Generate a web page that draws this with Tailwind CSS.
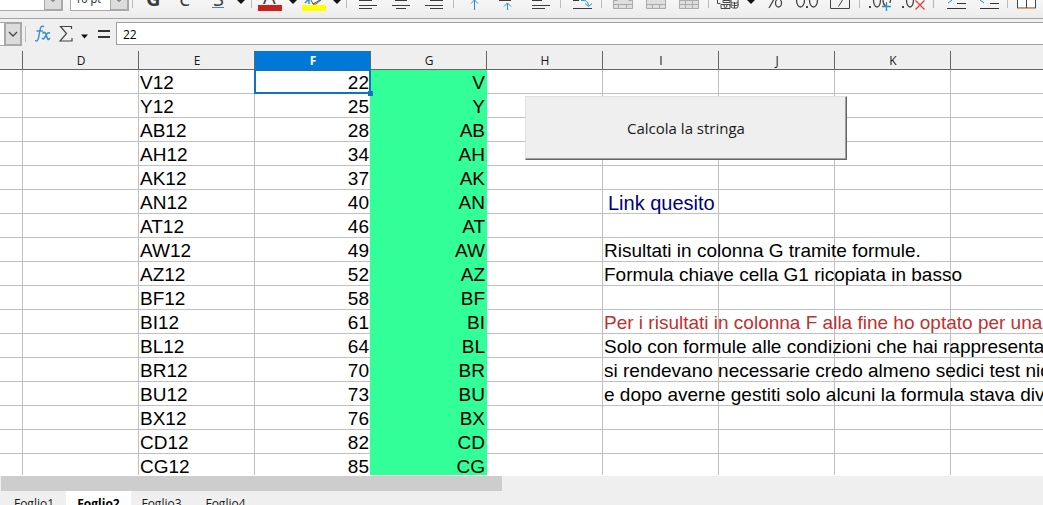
<!DOCTYPE html>
<html lang="it">
<head>
<meta charset="utf-8">
<title>Foglio2</title>
<script src="https://cdn.jsdelivr.net/npm/@tailwindcss/browser@4"></script>
</head>
<body class="flex h-screen flex-col overflow-hidden bg-[#efefef] font-['Open_Sans',sans-serif] text-xs text-[#1a1a1a]">

<!-- Formatting toolbar, scrolled so only its lower edge shows -->
<div role="toolbar" aria-label="Formattazione" class="flex h-[19px] shrink-0 overflow-hidden border-b border-[#a6a6a6] bg-linear-to-b from-[#f6f6f6] to-[#ececec]">
  <div class="flex h-[11px] w-[63px] shrink-0 items-end overflow-hidden border-r-2 border-b border-[#a8a8a8] bg-white">
    <input aria-label="Nome carattere" class="h-6 w-11 min-w-0 bg-white">
    <button aria-label="Elenco caratteri" class="flex h-6 flex-1 items-end justify-center border-b border-l border-[#a8a8a8] bg-[#dcdcdc]"><svg class="h-6 w-4" viewBox="0 0 16 24" fill="none" stroke="#444"><path d="M4 12.500l4 4 4-4"/></svg></button>
  </div>
  <div class="ml-[7px] flex h-[11px] w-[59px] shrink-0 items-end overflow-hidden border-x border-r-2 border-b border-[#a8a8a8] bg-white">
    <input aria-label="Dimensione carattere" value="10 pt" class="h-6 w-10 min-w-0 bg-white pl-1 text-[11px]">
    <button aria-label="Elenco dimensioni" class="flex h-6 flex-1 items-end justify-center border-b border-l border-[#a8a8a8] bg-[#dcdcdc]"><svg class="h-6 w-4" viewBox="0 0 16 24" fill="none" stroke="#444"><path d="M4 12.500l4 4 4-4"/></svg></button>
  </div>
  <svg class="h-[18px] w-[11px] shrink-0" viewBox="129 0 11 18"><path d="M132.500 0v8" stroke="#bbb"/></svg>
  <button aria-label="Grassetto" class="w-[32px] shrink-0"><svg class="h-[18px] w-[32px]" viewBox="140 0 32 18"><text x="146" y="6" font-size="20" font-weight="700" fill="#3b3b3b">G</text></svg></button>
  <button aria-label="Corsivo" class="w-[33px] shrink-0"><svg class="h-[18px] w-[33px]" viewBox="172 0 33 18"><text x="179" y="6" font-size="20" font-style="italic" fill="#3b3b3b">C</text></svg></button>
  <button aria-label="Sottolineato" class="w-[48px] shrink-0"><svg class="h-[18px] w-[48px]" viewBox="205 0 48 18"><text x="213" y="6" font-size="20" fill="#3b3b3b">S</text><path d="M212 7.500h12" stroke="#3a87c8"/><path d="M237 0h8l-4 4z" fill="#111"/><path d="M251.500 0v8" stroke="#bbb"/></svg></button>
  <button aria-label="Colore carattere" class="w-[46px] shrink-0"><svg class="h-[18px] w-[46px]" viewBox="253 0 46 18"><text x="263" y="4" font-size="20" fill="#3b3b3b">A</text><path d="M258 5h24v6h-24z" fill="#c9211e"/><path d="M289 0h8l-4 4z" fill="#111"/></svg></button>
  <button aria-label="Colore evidenziazione" class="w-[52px] shrink-0"><svg class="h-[18px] w-[52px]" viewBox="299 0 52 18" fill="none"><path d="M305 3l3-3M309 0v4" stroke="#3a87c8" stroke-width="1.500"/><path d="M311 0l2 4 7-4M313 4h3l5-4" stroke="#555"/><path d="M302 5h24v6h-24z" fill="#ff0"/><path d="M333 0h8l-4 4z" fill="#111"/><path d="M346.500 0v8" stroke="#bbb"/></svg></button>
  <button aria-label="Allinea a sinistra" class="w-[33px] shrink-0"><svg class="h-[18px] w-[33px]" viewBox="351 0 33 18" stroke="#3b3b3b"><path d="M359 .5h13M359 5.500h18M359 8.500h13"/></svg></button>
  <button aria-label="Centra" class="w-[33px] shrink-0"><svg class="h-[18px] w-[33px]" viewBox="384 0 33 18" stroke="#3b3b3b"><path d="M395 .5h12M392 5.500h18M396 8.500h10"/></svg></button>
  <button aria-label="Allinea a destra" class="w-[40px] shrink-0"><svg class="h-[18px] w-[40px]" viewBox="417 0 40 18" stroke="#3b3b3b"><path d="M430 .5h13M425 5.500h18M430 8.500h13"/><path d="M453.500 0v8" stroke="#bbb"/></svg></button>
  <button aria-label="Allinea in alto" class="w-[34px] shrink-0"><svg class="h-[18px] w-[34px]" viewBox="457 0 34 18" fill="none" stroke="#2b8bd0"><path d="M474.500 10V0M471 3.500l3.500-3.500 3.500 3.500"/></svg></button>
  <button aria-label="Centra verticalmente" class="w-[33px] shrink-0"><svg class="h-[18px] w-[33px]" viewBox="491 0 33 18" fill="none" stroke="#2b8bd0"><path d="M499 .5h12" stroke="#3b3b3b"/><path d="M507.500 10V3M504 6.500l3.500-3.500 3.500 3.500"/></svg></button>
  <button aria-label="Allinea in basso" class="w-[41px] shrink-0"><svg class="h-[18px] w-[41px]" viewBox="524 0 41 18" stroke="#3b3b3b"><path d="M532 .5h10M532 5.500h18M532 8.500h13"/><path d="M560.500 0v8" stroke="#bbb"/></svg></button>
  <button aria-label="Testo a capo" class="w-[42px] shrink-0"><svg class="h-[18px] w-[42px]" viewBox="565 0 42 18" fill="none" stroke="#3b3b3b"><path d="M573 .5h6M573 8.500h19"/><path d="M581 .5c5-.5 7 1 7.500 5M585 3.500l3.500 3 3.500-3" stroke="#2b8bd0"/><path d="M601.500 0v8" stroke="#bbb"/></svg></button>
  <button aria-label="Unisci e centra" class="w-[33px] shrink-0"><svg class="h-[18px] w-[33px]" viewBox="607 0 33 18" fill="#dedede" stroke="#aaa"><path d="M613.500-3h19V8.500h-19zM613.500 4.500h19M618.500 4.500v4M626.500 4.500v4M613.500 .5h4M628.500 .5h4"/></svg></button>
  <button aria-label="Unisci celle" class="w-[33px] shrink-0"><svg class="h-[18px] w-[33px]" viewBox="640 0 33 18" fill="#dedede" stroke="#aaa"><path d="M646.500-3h19V8.500h-19zM646.500 4.500h19M652.500 4.500v4M659.500 4.500v4"/></svg></button>
  <button aria-label="Dividi celle" class="w-[38px] shrink-0"><svg class="h-[18px] w-[38px]" viewBox="673 0 38 18" fill="#dedede" stroke="#aaa"><path d="M679.500-3h19V8.500h-19zM679.500 4.500h19M685.500 0v8.500M692.500 0v8.500M679.500 .5h19"/><path d="M708.500 0v8" stroke="#bbb"/></svg></button>
  <button aria-label="Formato valuta" class="w-[48px] shrink-0"><svg class="h-[18px] w-[48px]" viewBox="711 0 48 18" fill="#f4f4f4" stroke="#444"><path d="M717.500 0v3.500h3M721 4.500h9v4h-9zM731 0v7c1 1.500 7 1.500 7 0V0M731 2c1 1.500 7 1.500 7 0M731 4.500c1 1.500 7 1.500 7 0M723 2.500v-2h7v2zM734.500 2v6"/><circle cx="725.500" cy="6" r="1.500"/><path d="M747 0h8l-4 4z" fill="#111" stroke="none"/></svg></button>
  <button aria-label="Formato percentuale" class="w-[30px] shrink-0"><svg class="h-[18px] w-[30px]" viewBox="759 0 30 18" fill="none" stroke="#444" stroke-width="1.300"><path d="M769 8l8-14"/><ellipse cx="778.500" cy="3" rx="3" ry="4"/></svg></button>
  <button aria-label="Formato numero" class="w-[35px] shrink-0"><svg class="h-[18px] w-[35px]" viewBox="789 0 35 18" fill="none" stroke="#444" stroke-width="1.300"><ellipse cx="800.500" cy="0" rx="4" ry="7"/><ellipse cx="813.500" cy="0" rx="4" ry="7"/><path d="M806 7h2" stroke-width="2"/></svg></button>
  <button aria-label="Formato data" class="w-[39px] shrink-0"><svg class="h-[18px] w-[39px]" viewBox="824 0 39 18" fill="none" stroke="#444"><path d="M830.500 0v8.500h19V0M842.500 0l-4 6.500"/><path d="M859.500 0v8" stroke="#bbb"/></svg></button>
  <button aria-label="Aggiungi decimale" class="w-[33px] shrink-0"><svg class="h-[18px] w-[33px]" viewBox="863 0 33 18" fill="none" stroke="#444" stroke-width="1.300"><path d="M869 7h2" stroke-width="2"/><ellipse cx="877" cy="0" rx="3.500" ry="7"/><path d="M883 0c0 3 1 5 2.500 6M890.500 0l-.5 3"/><path d="M886.500 2v9M882 6.500h9" stroke="#2b8bd0"/></svg></button>
  <button aria-label="Elimina decimale" class="w-[41px] shrink-0"><svg class="h-[18px] w-[41px]" viewBox="896 0 41 18" fill="none" stroke="#444" stroke-width="1.300"><path d="M902 7h2" stroke-width="2"/><ellipse cx="910" cy="0" rx="3.500" ry="7"/><path d="M915.500 .5l9 9M924.500 .5l-9 9" stroke="#e2413c"/><path d="M933.500 0v8" stroke="#bbb"/></svg></button>
  <button aria-label="Aumenta rientro" class="w-[37px] shrink-0"><svg class="h-[18px] w-[37px]" viewBox="937 0 37 18" fill="none" stroke="#333"><path d="M957 3.500h9M947 8.500h19"/><path d="M948 3l4-3" stroke="#2b8bd0"/></svg></button>
  <button aria-label="Diminuisci rientro" class="w-[36px] shrink-0"><svg class="h-[18px] w-[36px]" viewBox="974 0 36 18" fill="none" stroke="#333"><path d="M990 3.500h9M980 8.500h19"/><path d="M984 3l-4-3" stroke="#2b8bd0"/><path d="M1007.500 0v8" stroke="#bbb"/></svg></button>
  <button aria-label="Bordi" class="w-[33px] shrink-0"><svg class="h-[18px] w-[33px]" viewBox="1010 0 33 18" fill="#fff" stroke="#444"><path d="M1017.500-2h18v10h-18zM1026.500 0v8"/><path d="M1017 8.500h19" stroke="#f0a050"/></svg></button>
</div>

<!-- Formula bar -->
<div class="flex h-8 shrink-0 items-center pt-[1px] pb-1">
  <span class="h-6 w-1 border-y border-[#a8a8a8] bg-white"></span>
  <button aria-label="Casella nome" class="flex h-6 w-[18px] shrink-0 items-center justify-center border-2 border-[#a8a8a8] bg-[#dcdcdc]"><svg class="h-3 w-3" viewBox="0 0 12 12" fill="none" stroke="#444" stroke-width="1.300"><path d="M2 4l4 4 4-4"/></svg></button>
  <span class="ml-[3px] h-4 w-px bg-[#bbb]"></span>
  <button aria-label="Creazione guidata funzione" class="ml-[9px] w-4 shrink-0"><svg class="h-5 w-4" viewBox="0 0 16 20" fill="none" stroke="#3d8fcc" stroke-width="1.400" stroke-linecap="round"><path d="M8.500 2.500C6.500 1.500 5.500 3 5 6L3.500 14c-.5 2.500-1.500 3.500-3 2.700M2 7h5.500"/><path d="M8 9c2-1.500 2.500 0 3.500 3s1.500 4.500 3 2.500M14.500 9c-2-1-3 1-4 3s-1.500 3.500-3 2.500" stroke-width="1.600"/></svg></button>
  <button aria-label="Somma" class="ml-2 flex w-[30px] shrink-0 items-center"><svg class="h-5 w-[30px]" viewBox="0 0 30 20" fill="none" stroke="#444" stroke-width="1.200"><path d="M12.500 5V2.500H1.500l6 7-6.500 7.500h12v-3"/><path d="M22 10.500h7l-3.500 4z" fill="#111" stroke="none"/></svg></button>
  <button aria-label="Formula" class="ml-[9px] w-3 shrink-0"><svg class="h-5 w-3" viewBox="0 0 12 20" stroke="#333" stroke-width="2"><path d="M0 7h12M0 13h12"/></svg></button>
  <input aria-label="Riga di immissione" value="22" class="ml-[6px] h-[23px] min-w-0 flex-1 border border-r-0 border-[#a0a0a0] bg-white pt-px pl-[6px] text-xs text-black">
</div>

<!-- Sheet -->
<main class="relative min-h-0 flex-1 overflow-hidden border-b border-white bg-white">
  <table class="w-full table-fixed border-separate border-spacing-0">
    <colgroup><col class="w-[23px]"><col class="w-[116px]"><col class="w-[116px]"><col class="w-[116px]"><col class="w-[116px]"><col class="w-[116px]"><col class="w-[116px]"><col class="w-[116px]"><col class="w-[116px]"><col></colgroup>
    <thead><tr id="heads"></tr></thead>
    <tbody id="rows" class="font-['Liberation_Sans',sans-serif] text-[19px] leading-5 text-black"></tbody>
  </table>
  <button class="absolute top-[45px] left-[525px] h-16 w-[322px] border border-t-[#e0e0e0] border-r-[#666] border-b-[#666] border-l-[#e0e0e0] bg-[#efefef] text-[15px] text-[#1a1a1a] shadow-[inset_-1px_-1px_0_#a0a0a0]">Calcola la stringa</button>
</main>

<!-- Horizontal scrollbar -->
<div class="h-[15px] shrink-0 pl-px"><div class="h-full w-[501px] bg-[#cdcdcd]"></div></div>

<!-- Sheet tabs -->
<nav class="flex h-[14px] shrink-0 items-start overflow-hidden pl-[2px] leading-[22px]">
  <button class="w-16 shrink-0 pt-[2px]">Foglio1</button>
  <button class="w-[65px] shrink-0 bg-white pt-[2px] font-bold text-black">Foglio2</button>
  <button class="w-[61px] shrink-0 pt-[2px]">Foglio3</button>
  <button class="w-[67px] shrink-0 pt-[2px]">Foglio4</button>
</nav>

<script>
const heads = ['', 'D', 'E', 'F', 'G', 'H', 'I', 'J', 'K', ''];
document.getElementById('heads').innerHTML = heads.map((h, i) =>
  `<th scope="col" class="h-[19px] border-b border-[#666] pt-[2px] pr-0 pb-0 pl-px text-xs leading-4 ${i < 9 ? 'border-r' : ''} ${h === 'F' ? 'bg-[#0078d7] font-bold text-white' : 'bg-[#efefef] font-normal'}">${h}</th>`).join('');
const data = [['V',22],['Y',25],['AB',28],['AH',34],['AK',37],['AN',40],['AT',46],['AW',49],['AZ',52],['BF',58],['BI',61],['BL',64],['BR',70],['BU',73],['BX',76],['CD',82],['CG',85]];
const notes = {
  5: '<a href="#" class="block pl-1 text-xl leading-5 text-[#000080]">Link quesito</a>',
  7: 'Risultati in colonna G tramite formule.',
  8: 'Formula chiave cella G1 ricopiata in basso',
  10: '<span class="text-[#c03030]">Per i risultati in colonna F alla fine ho optato per una macro</span>',
  11: 'Solo con formule alle condizioni che hai rappresentato',
  12: 'si rendevano necessarie credo almeno sedici test nidificati',
  13: 'e dopo averne gestiti solo alcuni la formula stava diventando'
};
const empty = '<td class="border-r border-b border-[#c0c0c0] p-0"></td>';
document.getElementById('rows').innerHTML = data.map(([g, f], i) => `<tr>${empty}${empty}
<td class="h-6 border-r border-b border-[#c0c0c0] pt-[3px] pr-0 pb-0 pl-px align-top">${g}12</td>
<td class="relative border-r border-b border-r-[#33ff99] border-b-[#c0c0c0] pt-[3px] pr-px pb-0 pl-0 text-right align-top">${f}${i ? '' : '<span class="absolute -inset-px border-2 border-[#0f72c4]"></span><span class="absolute -right-[3px] -bottom-[3px] z-10 size-[5px] bg-[#0f72c4]"></span>'}</td>
<td class="border-r border-b border-[#33ff99] bg-[#33ff99] pt-[3px] pr-px pb-0 pl-0 text-right align-top">${g}</td>
${empty}<td class="border-r border-b border-[#c0c0c0] pt-[3px] pr-0 pb-0 pl-px align-top whitespace-nowrap">${notes[i] || ''}</td>
${empty}${empty}<td class="border-b border-[#c0c0c0] p-0"></td></tr>`).join('');
</script>
</body>
</html>
